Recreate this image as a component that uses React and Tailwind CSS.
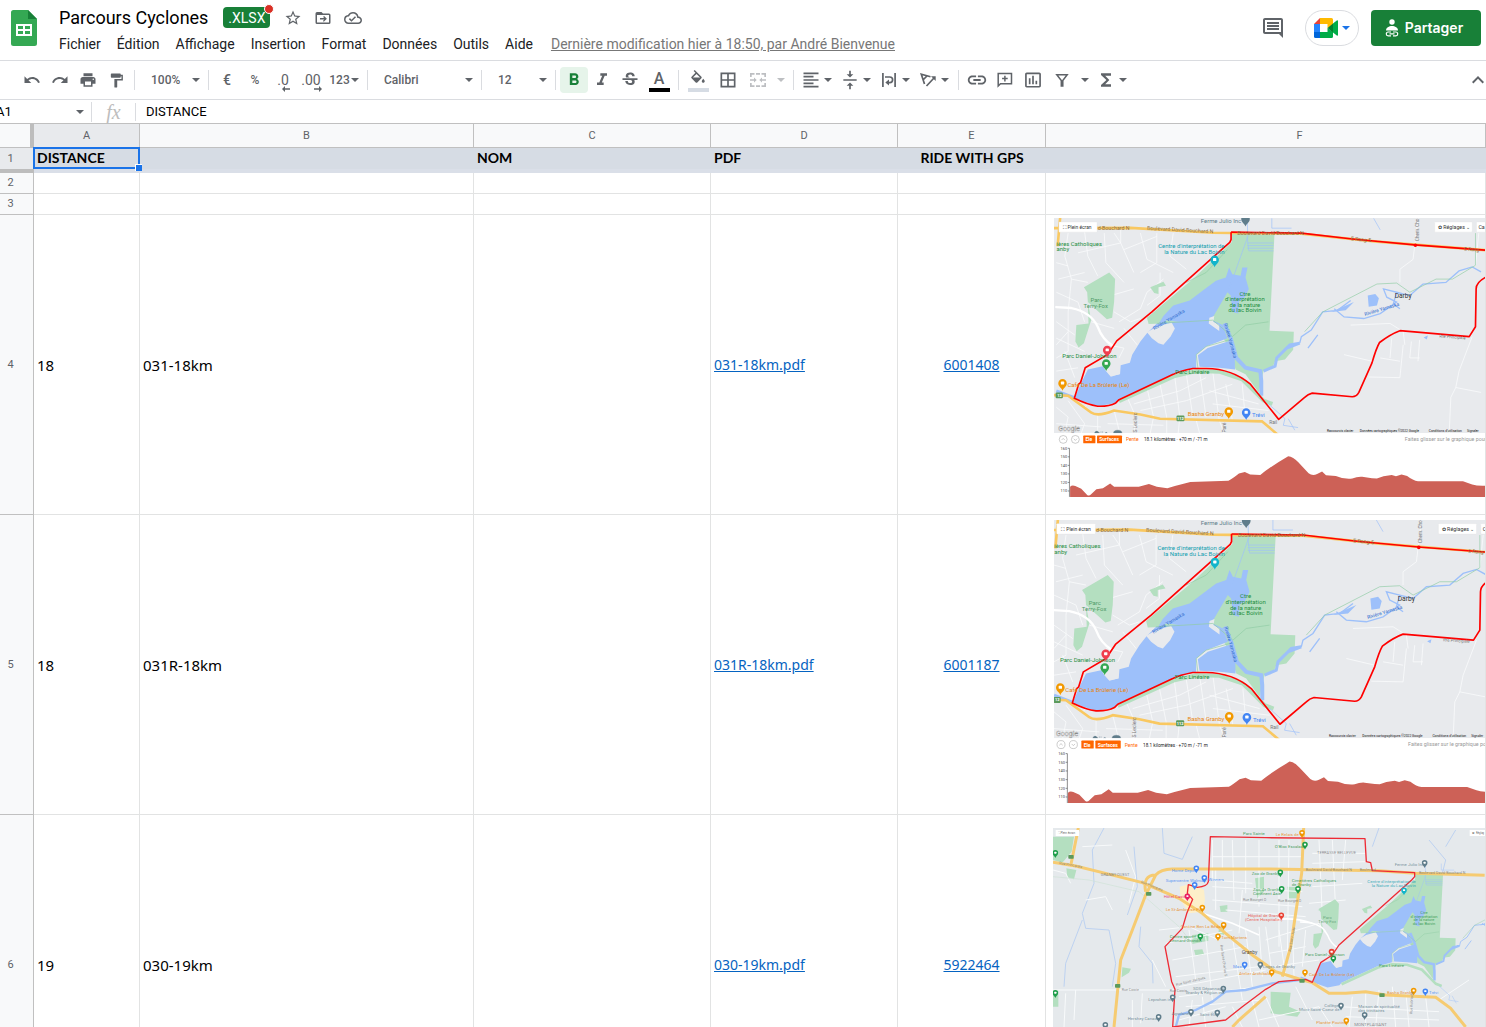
import React from "react";
import {
  MdUndo,
  MdRedo,
  MdPrint,
  MdFormatPaint,
  MdFormatBold,
  MdFormatItalic,
  MdStrikethroughS,
  MdBorderAll,
  MdFormatAlignLeft,
  MdVerticalAlignCenter,
  MdLink,
  MdInsertChartOutlined,
  MdFunctions,
  MdExpandLess,
  MdStarBorder,
  MdOutlineCloudDone,
} from "react-icons/md";

const UI = "font-['Roboto','Liberation_Sans',sans-serif]";
const HEAD = "font-['Lato','Open_Sans',sans-serif]";
const CELL = "font-['Noto_Sans','Open_Sans',sans-serif]";

function Caret({ className = "" }) {
  return (
    <svg viewBox="0 0 8 4" className={`h-1 w-2 shrink-0 fill-current ${className}`} aria-hidden="true">
      <path d="M0 0h8L4 4z" />
    </svg>
  );
}

function Sep() {
  return <div className="mx-1 h-5 w-px shrink-0 bg-[#dadce0]" />;
}

function Tool({ label, className = "w-7", children }) {
  return (
    <button type="button" aria-label={label} className={`flex h-[26px] shrink-0 items-center justify-center ${className}`}>
      {children}
    </button>
  );
}

function MenuTool({ label, children }) {
  return (
    <button type="button" aria-label={label} className="flex h-[26px] w-[39px] shrink-0 items-center">
      <span className="flex w-[26px] justify-center">{children}</span>
      <Caret />
    </button>
  );
}

function Pick({ label, value, className }) {
  return (
    <div className={`relative shrink-0 ${className}`}>
      <select
        aria-label={label}
        defaultValue={value}
        className="h-[26px] w-full appearance-none bg-transparent pl-3 text-xs font-medium text-[#5f6368] outline-none"
      >
        <option>{value}</option>
      </select>
      <Caret className="pointer-events-none absolute right-1 top-[11px]" />
    </div>
  );
}

function SheetsLogo() {
  return (
    <svg viewBox="0 0 26 36" className="h-9 w-[26px]" aria-hidden="true">
      <path d="M2.500 0H17l9 9v24.500a2.500 2.500 0 0 1-2.500 2.500h-21A2.500 2.500 0 0 1 0 33.500v-31A2.500 2.500 0 0 1 2.500 0z" fill="#34a853" />
      <path d="M17 0l9 9h-9z" fill="#188038" />
      <path d="M5 14h16v12H5zM7 16v3h5v-3zM14 16v3h5v-3zM7 21v3h5v-3zM14 21v3h5v-3z" fill="#fff" fillRule="evenodd" />
    </svg>
  );
}

function FolderMove() {
  return (
    <svg viewBox="0 0 24 24" className="size-[18px] fill-current" aria-hidden="true">
      <path d="M20 6h-8l-2-2H4a2 2 0 0 0-2 2v12a2 2 0 0 0 2 2h16a2 2 0 0 0 2-2V8a2 2 0 0 0-2-2zm0 12H4V8h16zM12.200 16.800l1.200 0L17.200 13l-3.800-3.800-1.300 1.300 1.500 1.600H8v1.800h5.600l-1.500 1.600z" />
    </svg>
  );
}

function MeetLogo() {
  return (
    <svg viewBox="0 0 24 20" className="h-5 w-6" aria-hidden="true">
      <path d="M6 0v6H0z" fill="#ea4335" />
      <path d="M0 6h6v8H0z" fill="#2684fc" />
      <path d="M0 14h6v6H1.500A1.500 1.500 0 0 1 0 18.500z" fill="#0066da" />
      <path d="M6 0h11.500A1.500 1.500 0 0 1 19 1.500V7l-5.500 3V6H6z" fill="#ffba00" />
      <path d="M6 14h7.500v-4l5.500 4v4.500a1.500 1.500 0 0 1-1.500 1.500H6z" fill="#00ac47" />
      <path d="M13.500 10L19 5.500v9z" fill="#00832d" />
      <path d="M19 5.500l3.800-3c.5-.4 1.200-.1 1.200.6v13.800c0 .7-.7 1-1.200.6l-3.800-3z" fill="#00ac47" />
    </svg>
  );
}

function ShareIcon() {
  return (
    <svg viewBox="0 0 14 18" className="h-[18px] w-[14px]" fill="none" aria-hidden="true">
      <circle cx="7" cy="3" r="2.700" fill="#fff" />
      <path d="M1 11.500c0-3 3-4.500 6-4.500s6 1.500 6 4.500z" fill="#fff" />
      <path d="M6 13H3.200a1.900 1.900 0 0 0 0 3.800H6M8 13h2.800a1.900 1.900 0 0 1 0 3.800H8M4.500 14.900h5" stroke="#fff" strokeWidth="1.200" />
    </svg>
  );
}

function DecimalIcon({ digits, more }) {
  return (
    <span className="relative text-sm font-normal leading-4">
      {digits}
      <svg viewBox="0 0 8 6" className="absolute -bottom-1 -right-px h-[6px] w-2 fill-current" aria-hidden="true">
        <path d={more ? "M0 2.300h5V0l3 3-3 3V3.700H0z" : "M8 2.300H3V0L0 3l3 3V3.700h5z"} />
      </svg>
    </span>
  );
}

function MergeIcon() {
  return (
    <svg viewBox="0 0 16 14" className="h-[14px] w-4 fill-current" aria-hidden="true">
      <path d="M0 0h4.500v1.700H1.700V4H0zM6 0h4v1.700H6zM11.500 0H16v4h-1.700V1.700h-2.800zM0 10h1.700v2.300h2.800V14H0zM6 12.300h4V14H6zM14.300 10H16v4h-4.500v-1.700h2.800zM0 6.200h4V4.500L6.700 7 4 9.500V7.800H0zM16 6.200h-4V4.500L9.300 7 12 9.500V7.800h4z" />
    </svg>
  );
}

function WrapIcon() {
  return (
    <svg viewBox="0 0 14 14" className="size-[14px]" fill="none" stroke="currentColor" strokeWidth="1.700" aria-hidden="true">
      <path d="M.9 0v14M13.100 0v14M3 4h4.800a2.800 2.800 0 0 1 0 5.600H5.500" />
      <path d="M7 6.600v6L3.300 9.600z" fill="currentColor" stroke="none" />
    </svg>
  );
}

function RotateIcon() {
  return (
    <svg viewBox="0 0 16 14" className="h-[14px] w-4" fill="none" stroke="currentColor" strokeWidth="1.700" aria-hidden="true">
      <path d="M4.500 11L1.300 1.300 10.500 3.800M3 6.800L7 3M6.500 13L14 5" />
      <path d="M11 3.300h4.700V8z" fill="currentColor" stroke="none" />
    </svg>
  );
}

function CommentAddIcon() {
  return (
    <svg viewBox="0 0 16 16" className="size-4" fill="none" stroke="currentColor" strokeWidth="1.500" aria-hidden="true">
      <path d="M1.200 14V1.500h13.300v10.200H3.500zM7.900 3.800v5.600M5.100 6.600h5.600" />
    </svg>
  );
}

function FilterIcon() {
  return (
    <svg viewBox="0 0 14 14" className="size-[14px]" fill="none" stroke="currentColor" strokeWidth="1.500" aria-hidden="true">
      <path d="M1.800 1.800h10.400L7.800 7.500v5.500H6.300V7.500z" />
    </svg>
  );
}

function FillIcon() {
  return (
    <svg viewBox="0 0 24 24" className="size-[18px] fill-current" aria-hidden="true">
      <path
        fillRule="evenodd"
        d="M16.560 8.940L7.620 0 6.210 1.410l2.380 2.380-5.150 5.150a1.500 1.500 0 0 0 0 2.120l5.500 5.500c.29.290.68.440 1.060.440s.77-.15 1.060-.44l5.500-5.500c.59-.58.59-1.530 0-2.120zM5.210 10L10 5.210 14.790 10zM19 11.500s-2 2.170-2 3.500c0 1.100.9 2 2 2s2-.9 2-2c0-1.330-2-3.500-2-3.500z"
      />
    </svg>
  );
}

const MENUS = ["Fichier", "Édition", "Affichage", "Insertion", "Format", "Données", "Outils", "Aide"];

function Header() {
  return (
    <header className="flex h-[61px] shrink-0 justify-between border-b border-[#dadce0] pl-[11px] pr-[5px]">
      <div className="flex">
        <a href="#accueil" aria-label="Accueil Sheets" className="mt-2.5">
          <SheetsLogo />
        </a>
        <div className="ml-[22px] pt-[7px]">
          <div className="flex h-[21px] items-center">
            <h1 className="whitespace-nowrap text-lg leading-5 text-black">Parcours Cyclones</h1>
            <span className="relative ml-[15px] flex h-[21px] w-[47px] items-center justify-center rounded bg-[#188038] text-sm text-white">
              .XLSX
              <span className="absolute -right-1 -top-[3px] size-[10px] rounded-full border border-white bg-[#d93025]" />
            </span>
            <div className="ml-3.5 flex items-center gap-3 text-[#5f6368]">
              <button type="button" aria-label="Suivre"><MdStarBorder className="size-[18px]" /></button>
              <button type="button" aria-label="Déplacer"><FolderMove /></button>
              <button type="button" aria-label="État du document"><MdOutlineCloudDone className="size-[18px]" /></button>
            </div>
          </div>
          <nav className="mt-1.5 flex h-5 items-center gap-4 whitespace-nowrap text-sm text-[#202124]">
            {MENUS.map((m) => (
              <button type="button" key={m}>{m}</button>
            ))}
            <a href="#historique" className="ml-0.5 text-[#777] underline">
              Dernière modification hier à 18:50, par André Bienvenue
            </a>
          </nav>
        </div>
      </div>
      <div className="mt-2.5 flex h-9 items-center">
        <button type="button" aria-label="Commentaires" className="mr-5 text-[#5f6368]">
          <svg viewBox="0 0 24 24" className="size-6 fill-current" aria-hidden="true">
            <path d="M21.990 4c0-1.100-.89-2-1.990-2H4c-1.100 0-2 .9-2 2v12c0 1.100.9 2 2 2h14l4 4-.01-18zM20 4v12H4V4zM6 12h12v2H6zm0-3h12v2H6zm0-3h12v2H6z" />
          </svg>
        </button>
        <button type="button" aria-label="Meet" className="flex h-9 w-[54px] items-center justify-center gap-1 rounded-full border border-[#dadce0] text-[#1a73e8]">
          <MeetLogo />
          <Caret />
        </button>
        <button type="button" className="ml-3 flex h-9 w-[110px] items-center justify-center gap-1.5 rounded bg-[#188038] pr-1 font-['Inter',sans-serif] text-sm font-semibold text-white">
          <ShareIcon />
          Partager
        </button>
      </div>
    </header>
  );
}

function Toolbar() {
  return (
    <div className="flex h-[39px] shrink-0 items-center justify-between border-b border-[#dadce0] text-[#5f6368]">
      <div className="flex items-center pl-[18px] text-sm font-medium">
        <Tool label="Annuler"><MdUndo className="size-[18px]" /></Tool>
        <Tool label="Rétablir"><MdRedo className="size-[18px]" /></Tool>
        <Tool label="Imprimer"><MdPrint className="size-[18px]" /></Tool>
        <Tool label="Copier la mise en forme"><MdFormatPaint className="size-[17px]" /></Tool>
        <Sep />
        <Pick label="Zoom" value="100%" className="w-[65px]" />
        <Sep />
        <Tool label="Format euro">€</Tool>
        <Tool label="Format pourcentage"><span className="text-xs">%</span></Tool>
        <Tool label="Réduire les décimales"><DecimalIcon digits=".0" /></Tool>
        <Tool label="Ajouter des décimales"><DecimalIcon digits=".00" more /></Tool>
        <Tool label="Autres formats" className="w-[38px]">
          <span className="mr-px text-xs">123</span>
          <Caret />
        </Tool>
        <Sep />
        <Pick label="Police" value="Calibri" className="w-[105px]" />
        <Sep />
        <Pick label="Taille de police" value="12" className="w-[65px]" />
        <Sep />
        <Tool label="Gras" className="w-7 rounded-sm bg-[#e6f4ea] text-[#188038]"><MdFormatBold className="size-5" /></Tool>
        <Tool label="Italique"><MdFormatItalic className="size-5" /></Tool>
        <Tool label="Barré"><MdStrikethroughS className="size-5" /></Tool>
        <Tool label="Couleur du texte" className="w-[30px]">
          <span className="flex h-6 w-[21px] items-center justify-center border-b-4 border-black pt-0.5 text-base">A</span>
        </Tool>
        <Sep />
        <Tool label="Couleur de remplissage" className="w-[30px]">
          <span className="flex h-6 w-[21px] items-end justify-center border-b-4 border-[#d6dce4]"><FillIcon /></span>
        </Tool>
        <Tool label="Bordures" className="w-[30px]"><MdBorderAll className="size-5" /></Tool>
        <Tool label="Fusionner" className="w-[30px] text-[#bdbfc2]"><MergeIcon /></Tool>
        <Tool label="Options de fusion" className="w-4 text-[#bdbfc2]"><Caret /></Tool>
        <Sep />
        <MenuTool label="Alignement horizontal"><MdFormatAlignLeft className="size-5" /></MenuTool>
        <MenuTool label="Alignement vertical"><MdVerticalAlignCenter className="size-5" /></MenuTool>
        <MenuTool label="Retour à la ligne"><WrapIcon /></MenuTool>
        <MenuTool label="Rotation du texte"><RotateIcon /></MenuTool>
        <Sep />
        <Tool label="Lien"><MdLink className="size-[22px]" /></Tool>
        <Tool label="Commentaire"><CommentAddIcon /></Tool>
        <Tool label="Graphique"><MdInsertChartOutlined className="size-5" /></Tool>
        <Tool label="Filtre" className="w-[30px]"><FilterIcon /></Tool>
        <Tool label="Vues filtrées" className="w-4"><Caret /></Tool>
        <MenuTool label="Fonctions"><MdFunctions className="size-5" /></MenuTool>
      </div>
      <button type="button" aria-label="Masquer les menus" className="-mr-1"><MdExpandLess className="size-6" /></button>
    </div>
  );
}

function FormulaBar() {
  return (
    <div className="flex h-6 shrink-0 items-center border-b border-[#c0c0c0] text-[13px] text-black">
      <input aria-label="Zone de nom" defaultValue="A1" className="-ml-1 w-20 outline-none" />
      <button type="button" aria-label="Plages nommées" className="flex w-[15px] justify-start text-[#5f6368]"><Caret /></button>
      <div className="h-5 w-px bg-[#dadce0]" />
      <span className="w-[43px] text-center font-['Liberation_Serif',serif] text-xl italic leading-5 text-[#bdbdbd]">fx</span>
      <div className="h-[18px] w-px bg-[#dadce0]" />
      <input aria-label="Barre de formule" defaultValue="DISTANCE" className="ml-2.5 min-w-0 flex-1 outline-none" />
    </div>
  );
}

const STREETS_WEST = [
  "M60 60L50 130L70 200L60 300M110 55L120 130L150 190M170 60L175 150L230 210M90 120L220 90L260 180M30 200L110 180M24 240L90 270L110 330",
  "M230 110L330 70M280 60L300 140L380 180M24 330L80 370M60 300L60 420L24 440M24 380L110 420M50 420L80 500M24 480L90 470",
  "M215 330L280 290L300 240L350 200M230 350L270 400M180 400L230 410L215 440M130 330L200 350M190 250L260 230M200 60L220 90L220 50M330 60L330 150L280 180",
  "M24 150L60 160M70 200L120 210M200 300L250 330L280 320M340 180L340 250L300 280M380 60L370 130L420 170M24 400L60 360",
];
const STREETS_SOUTH = [
  "M110 590L140 560M200 600L215 660M240 560L262 610L262 669M300 530L320 620L310 669M340 520L360 620L360 669M385 500L400 620L395 669M420 490L440 620",
  "M260 580L400 540L480 500M280 600L420 570L560 520M460 480L480 620M500 480L520 630L535 669M540 520L560 630M590 520L600 630M490 540L640 580M500 580L670 600",
  "M24 590L60 620L50 669M60 570L110 640L100 669M24 640L160 650M150 615L150 669M450 630L460 669M180 640L350 645",
];
const STREETS_EAST = [
  "M1125 15L1110 140L1070 170L1070 210M920 340L1040 335L1080 360L1085 400M900 430L985 450M1045 380L1040 440M1080 400L1070 500L975 498M1105 390L1100 440L1130 440M1130 385L1125 450M1010 440L1070 450",
  "M1290 375L1250 480L1240 530L1225 560L1220 669M1240 530L1317 545M1310 60L1300 160",
];

// Lake, parks and river shared by every map of the Lac Boivin area.
function LakeScenery() {
  return (
    <g fill="none">
      <path fill="#b4dfc0" d="M558 62L688 66L673 357L747 360L745 415L720 445L690 450L682 470L655 480L640 545L600 490L570 475L545 400L500 330L305 337L300 318L440 200L558 88z" />
      <path fill="#b4dfc0" d="M185 180L203 200L200 270L194 318L178 322L120 270L118 240L108 225zM120 270L130 325L108 395L92 408L82 390L85 340L122 335zM310 225L350 208L358 220L335 225L335 245L322 242z" />
      <path fill="#9dc0fa" d="M606 165L600 195L610 230L595 260L580 268L578 305L560 300L555 250L545 240L510 300L495 325L400 330L360 325L330 345L350 312L380 280L430 265L470 235L510 205L540 195L550 165L560 185L585 190L590 165z" />
      <path fill="#9dc0fa" d="M330 335L300 365L280 390L255 430L248 455L220 462L218 490L190 495L165 465L120 475L98 520L80 563L150 587L205 577L215 565L380 490L450 470L450 430L480 405L545 380L530 340L500 325L400 328z" />
      <path fill="#9dc0fa" d="M460 467L455 432L485 410L553 388L567 430L568 475L520 470z" />
      <path fill="#e8eaed" d="M300 362L330 345L375 332L385 350L372 375L350 400L335 395L315 380zM490 318L505 312L502 330L520 340L520 358L488 335zM120 473L140 465L165 463L175 480L190 497L215 490L218 460L150 430z" />
      <path stroke="#9dc0fa" strokeWidth="12" d="M535 335L555 380L572 440L600 470L645 480L648 510L648 555" />
      <path stroke="#b4dfc0" strokeWidth="12" d="M215 572L385 495L450 480L520 482L590 505L655 570L682 580" />
      <path stroke="#9dc0fa" strokeWidth="9" d="M24 540L85 563M655 480L690 465L695 440L725 410L765 395M725 410L735 400L765 395" />
      <path stroke="#9dc0fa" strokeWidth="4" d="M765 395L770 375L800 355L835 300L880 295L920 265M790 410L820 370M870 290L900 315L960 320L1010 305L1060 270L1030 255L1020 230L1060 240L1100 250L1140 215L1210 210L1250 175L1290 163L1317 178M1060 240L1050 275L1070 290" />
      <path fill="#9dc0fa" d="M972 250L995 245L1006 258L1000 280L975 284zM860 300L930 270L905 295zM1142 378L1155 372L1152 384z" />
      <path stroke="#9dc0fa" strokeWidth="2" d="M605 90H685M605 98H685M605 106H685M605 70L610 114H685M605 15L607 70M680 15V45H740M550 230L607 70M670 580L720 625L715 645L760 652M730 625L750 660M990 15L1010 50" />
      <path stroke="#8fcca4" strokeWidth="2" d="M330 335L500 325L560 375L600 340L670 330M780 360L835 300L1000 215L1060 212L1100 240L1180 200L1230 200L1300 158V60M455 470L450 430L480 405L550 385M420 210L480 180L545 110" />
      <path stroke="#fff" strokeWidth="7" strokeLinecap="round" d="M24 285L70 288Q130 300 150 345Q165 385 195 402" />
    </g>
  );
}

function Pin({ x, y, color, s = 1, inner = "#fff" }) {
  return (
    <g transform={`translate(${x} ${y}) scale(${s})`}>
      <path d="M0 18C-3 8-13 6-13-5a13 13 0 0 1 26 0C13 6 3 8 0 18z" fill={color} />
      <rect x="-5" y="-10" width="10" height="9" rx="2" fill={inner} />
    </g>
  );
}

const PROFILE =
  "M66 863V832Q72 826 82 830L100 838L118 857Q124 861 130 855L146 840L166 837L188 822L200 832H275L306 824L330 832L362 837L385 830L432 818L548 814Q560 808 580 792L598 787L614 795L645 796Q680 768 730 739Q745 740 760 757L792 791Q804 800 818 793L833 786L845 797L875 799Q900 810 925 807Q940 801 955 802L985 806L1000 807L1020 800L1045 796L1058 800L1075 795L1092 799Q1110 813 1125 815H1262L1290 825Q1305 830 1329 829V863z";

function LakeRouteMap({ viewBox, className, label }) {
  return (
    <svg viewBox={viewBox} preserveAspectRatio="xMinYMin slice" className={className} role="img" aria-label={label}>
      <rect x="10" y="10" width="1330" height="659" fill="#e8eaed" />
      <g fill="none" stroke="#f9fafb" strokeWidth="2.500">
        {[...STREETS_WEST, ...STREETS_SOUTH, ...STREETS_EAST].map((d) => (
          <path key={d} d={d} />
        ))}
      </g>
      <LakeScenery />
      <g fill="none" stroke="#f9c861" strokeWidth="8">
        <path d="M10 45L250 44L500 59L770 62L1000 86L1330 112M36 10L28 100M10 553L60 555L130 606Q150 620 200 600L280 612L340 625L650 633L700 675" />
      </g>
      <g fill="none" stroke="#f00" strokeWidth="5" strokeLinejoin="round">
        <path d="M556 57L770 60L925 78L1115 96L1330 112" />
        <path d="M1330 195Q1302 210 1302 230L1300 345L1281 375L1070 357Q1040 368 1008 393Q998 410 985 455L945 545Q938 558 925 558L803 547Q790 550 780 560L701 627L615 520Q560 473 480 472H440Q400 480 380 490L215 567L205 577Q185 588 150 587Q120 583 79 563L92 520L98 515L112 470L180 430L208 388L315 300L552 88L556 80V57" />
        <circle cx="1117" cy="97" r="3" />
      </g>
      <g fill="#fff" stroke="#e3e3e3">
        <rect x="32" y="26" width="116" height="31" rx="2" />
        <rect x="1176" y="26" width="114" height="31" rx="2" />
        <rect x="1303" y="26" width="60" height="31" rx="2" />
      </g>
      <g fontFamily="Roboto, sans-serif" fontSize="18" fill="#333">
        <text x="45" y="48" fontSize="15">⛶ Plein écran</text>
        <text x="1186" y="48" fontSize="16">✿ Réglages ⌄</text>
        <text x="1309" y="48" fontSize="16">Ca</text>
        <g fill="#8a6d45" fontSize="16">
          <text x="150" y="52">d-Bouchard N</text>
          <text x="300" y="50" transform="rotate(3 300 50)">Boulevard David-Bouchard N</text>
          <text x="575" y="65">Boulevard David-Bouchard N</text>
          <text x="920" y="82" transform="rotate(5 920 82)">E Rang 5</text>
          <text x="1265" y="113" fontSize="15" transform="rotate(5 1265 113)">E Rang</text>
        </g>
        <text x="464" y="30" fill="#607d8b">Ferme Julio Inc</text>
        <g fill="#1e8e3e">
          <text x="25" y="98">ières Catholiques</text>
          <text x="25" y="116">anby</text>
          <text x="128" y="270" fill="#4f9a67">Parc</text>
          <text x="107" y="287" fill="#4f9a67">Terry-Fox</text>
          <text x="42" y="440">Parc Daniel-Johnson</text>
          <text x="386" y="490">Parc Linéaire</text>
          <g textAnchor="middle">
            <text x="598" y="250">Ctre</text>
            <text x="598" y="267">d'interprétation</text>
            <text x="598" y="284">de la nature</text>
            <text x="598" y="301">du lac Boivin</text>
          </g>
        </g>
        <g fill="#129eaf" textAnchor="end">
          <text x="536" y="106">Centre d'interprétation de</text>
          <text x="536" y="124">la Nature du Lac Boivin</text>
        </g>
        <g fill="#2f6bce" fontSize="15">
          <text x="322" y="356" transform="rotate(-31 322 356)">Rivière Yamaska</text>
          <text x="534" y="336" transform="rotate(74 534 336)">Rivière Yamaska</text>
          <text x="964" y="312" transform="rotate(-17 964 312)">Rivière Yamaska</text>
        </g>
        <text x="1054" y="259" fontSize="20">Darby</text>
        <text x="58" y="530" fill="#e8850c">Café De La Brûlerie (Le)</text>
        <text x="424" y="616" fill="#e8850c">Basha Granby</text>
        <text x="620" y="619" fill="#4285f4">Trévi</text>
        <g fill="#777" fontSize="15">
          <text x="1128" y="84" fontSize="14" transform="rotate(-90 1128 84)">Chem. Cho</text>
          <text x="270" y="667" transform="rotate(-90 270 667)">S Leclerc</text>
          <text x="540" y="667" transform="rotate(-90 540 667)">Paré</text>
          <text x="672" y="641">Rail</text>
          <text x="1190" y="378" fontSize="13" transform="rotate(4 1190 378)">Rte Principale</text>
        </g>
        <path d="M140 669Q143 661 150 663L156 669zM160 669V663M165 669V663M172 669Q176 664 180 669M198 669A13 9 0 0 1 224 669" fill="#607d8b" stroke="#607d8b" />
        <text x="30" y="662" fontSize="21" fill="#fff" stroke="#8a8a8a" strokeWidth="1">Google</text>
        <g fontSize="10" fill="#111">
          <text x="848" y="665">Raccourcis clavier</text>
          <text x="948" y="665">Données cartographiques ©2022 Google</text>
          <text x="1158" y="665">Conditions d'utilisation</text>
          <text x="1274" y="665">Signaler</text>
        </g>
      </g>
      <Pin x={600} y={22} color="#607d8b" inner="#607d8b" />
      <Pin x={506} y={146} color="#12b5cb" />
      <Pin x={179} y={421} color="#f03e4e" />
      <Pin x={176} y={462} color="#34a853" />
      <Pin x={43} y={522} color="#f29900" />
      <Pin x={549} y={608} color="#f29900" />
      <Pin x={602} y={611} color="#4285f4" />
      <g fontFamily="Roboto, sans-serif" fontSize="12" fontWeight="700" fill="#fff" textAnchor="middle">
        <rect x="22" y="545" width="22" height="18" rx="3" fill="#5c9a5c" />
        <rect x="390" y="615" width="24" height="18" rx="3" fill="#5c9a5c" />
        <text x="402" y="628">112</text>
        <text x="34" y="558">12</text>
      </g>
      <rect x="10" y="669" width="1330" height="200" fill="#fff" />
      <g fill="none" stroke="#999" strokeWidth="1.500">
        <circle cx="45" cy="688" r="12" />
        <circle cx="82" cy="688" r="12" />
        <path d="M40 690l5-5 5 5M77 686l5 5 5-5" />
      </g>
      <g fill="#f60">
        <rect x="106" y="676" width="37" height="24" rx="2" />
        <rect x="148" y="676" width="76" height="24" rx="2" />
      </g>
      <g fontFamily="Roboto, sans-serif" fontSize="15">
        <text x="113" y="694" fill="#fff" fontWeight="700">Ele</text>
        <text x="155" y="694" fill="#fff" fontWeight="700">Surfaces</text>
        <text x="236" y="694" fill="#f60">Pente</text>
        <text x="291" y="694" fill="#222" fontSize="14">18.1 kilomètres · +70 m / -71 m</text>
        <text x="1085" y="693" fill="#999" fontSize="16">Faites glisser sur le graphique pour zo</text>
      </g>
      <path d={PROFILE} fill="#cd6157" />
      <path d="M59 715H64V863M59 741H64M59 767H64M59 793H64M59 819H64M59 845H64" fill="none" stroke="#555" strokeWidth="2" />
      <g fontFamily="Roboto, sans-serif" fontSize="12" fill="#444" textAnchor="end">
        {[160, 150, 140, 130, 120, 110].map((n, i) => (
          <text key={n} x="57" y={719 + i * 26}>{n}</text>
        ))}
      </g>
    </svg>
  );
}

const TOWN_STREETS = [
  "M22 510H390M60 520L55 621M90 510L85 600M110 80L200 75M120 240L180 230L200 270M240 90L270 170L250 250M260 540L260 621M290 520L285 610M320 420L360 500M22 150L60 160L75 190",
  "M340 330L430 320L520 360M360 370L560 330M380 420L600 380M390 470L640 440M400 500L660 450M430 330L450 480M480 350L500 540M560 350L590 540M600 330L620 500M640 320L650 470M400 530L640 500M420 560L650 540",
  "M500 60V180L620 190M530 60V150M560 60L565 240M600 60V220M640 60V260M500 110H770M500 200L770 215M500 240L770 260M540 270L780 290M510 150V270M700 60V380M730 60L725 420M590 210L580 340",
  "M660 360L820 310L840 340M670 400L780 380M660 320L680 470M700 330L720 470M740 320L745 470M780 330L770 440M680 440L820 420M820 60L830 290M860 60L870 270M900 60L890 180M800 100H960M800 200L950 190M790 250L900 240M800 130L960 125",
  "M920 530L910 621M960 520V621M1000 510L990 621M1040 500L1050 621M1080 510L1090 621M1140 530L1150 621M880 560L1180 575M900 590L1180 600M820 560L860 621M1180 540L1270 480",
  "M400 600L540 560M440 540L430 621M470 530L480 621M560 560L590 621M620 540L640 621M660 530L700 621M640 600L820 560M750 500L800 600",
];
const GREY_PINS = [[533, 509], [436, 579], [515, 581], [381, 535], [339, 594], [179, 618], [644, 437], [886, 560], [957, 588], [1137, 132]];
const ORANGE_PINS = [[534, 318], [517, 352], [470, 266], [769, 42], [778, 460], [678, 460], [902, 605], [1104, 515]];
const BLUE_PINS = [[452, 148], [476, 177], [447, 198], [597, 437], [1139, 517]];
const GREEN_PINS = [[29, 102], [464, 352], [29, 522], [778, 77], [757, 210], [704, 160], [708, 210], [863, 418]];

const TOWN_LABELS = [
  [378, 155, "Home Depot", "#4285f4"],
  [360, 186, "Supercentre Walmart", "#4285f4"],
  [488, 182, "Winners", "#4285f4"],
  [354, 235, "Hôtel Castel", "#e91e63"],
  [360, 273, "Le St-Ambroise Pub", "#e8850c"],
  [405, 323, "Cantine Ben La Bédaine", "#e8850c"],
  [527, 358, "Tom Martens", "#e8850c"],
  [372, 354, "Centre sportif", "#1e8e3e"],
  [372, 367, "Léonard-Grondin", "#1e8e3e"],
  [607, 290, "Hôpital de Granby", "#ea4335"],
  [598, 303, "(Centre Hospitalier)", "#ea4335"],
  [618, 166, "Zoo de Granby", "#1e8e3e"],
  [622, 212, "Zoo de Granby", "#1e8e3e"],
  [622, 225, "Continent Asie", "#1e8e3e"],
  [562, 443, "Maxi", "#4285f4"],
  [580, 466, "Atelier Archibald", "#e8850c"],
  [442, 510, "SOS Dépannage", "#607d8b"],
  [420, 522, "Granby & Région inc.", "#607d8b"],
  [308, 542, "Leprohon inc", "#607d8b"],
  [246, 600, "Hershey Canada", "#607d8b"],
  [378, 585, "Agrolane", "#607d8b"],
  [462, 587, "Saint-Éloi", "#607d8b"],
  [690, 49, "Le Relais de S", "#e8850c"],
  [687, 84, "O'Bloc Escalade", "#1e8e3e"],
  [592, 45, "Parc Sainte", "#1e8e3e"],
  [738, 186, "Cimetières Catholiques", "#1e8e3e"],
  [738, 198, "de Granby", "#1e8e3e"],
  [1047, 139, "Ferme Julio Inc", "#607d8b"],
  [965, 189, "Centre d'interprétation de", "#129eaf"],
  [978, 201, "la Nature du Lac Boivin", "#129eaf"],
  [778, 407, "Parc Daniel-Johnson", "#1e8e3e"],
  [832, 296, "Parc", "#5a9b6e"],
  [818, 308, "Terry-Fox", "#5a9b6e"],
  [1000, 440, "Parc Linéaire", "#1e8e3e"],
  [790, 468, "Café De La Brûlerie (Le)", "#e8850c"],
  [1024, 521, "Basha Granby", "#e8850c"],
  [1150, 523, "Trévi", "#4285f4"],
  [836, 562, "Collège", "#607d8b"],
  [760, 573, "Mont-Sacré-Coeur de", "#607d8b"],
  [938, 564, "Maison de spiritualité", "#607d8b"],
  [938, 576, "des trinitaires", "#607d8b"],
  [812, 611, "Planète Poutine", "#e8850c"],
  [652, 443, "Loges de Granby", "#607d8b"],
];

function TownRouteMap({ className, label }) {
  return (
    <svg viewBox="22 24 1296 720" preserveAspectRatio="xMinYMin slice" className={className} role="img" aria-label={label}>
      <rect x="22" y="24" width="1310" height="720" fill="#e5e9ec" />
      <path fill="#b4dfc0" d="M22 50H85L78 95L50 128L22 120zM62 145L92 150L85 178L65 172zM230 442L256 446L250 458L228 472zM440 345L488 340V362L440 372zM445 390L470 388L476 404L450 408zM628 175L655 170V215L635 235zM725 200L760 202L762 235L730 235zM675 515L735 518L730 560L765 575L755 590L675 580zM22 510H38V560H22zM815 270L870 262L860 278zM522 258L545 255V275L525 276zM520 325L535 322V345L518 340z" />
      <path fill="#fdefc9" d="M402 200L440 190L475 210L478 240L470 275L430 280L405 240z" />
      <path fill="none" stroke="#bdd2f1" strokeWidth="3" d="M175 24L140 90L145 190L110 280L120 325L190 330L210 430L200 500M110 300L60 430L55 500M265 80L275 200L245 285M350 24L355 100L410 118L440 50M285 320L280 380L320 430L322 490M1000 24L980 80M1150 60L1200 120L1190 160M1230 30L1200 80" />
      <g fill="none" stroke="#f8fafb" strokeWidth="3">
        {TOWN_STREETS.map((d) => (
          <path key={d} d={d} />
        ))}
      </g>
      <path d="M470 280L560 310L640 345M690 300Q740 290 800 310" fill="none" stroke="#fff" strokeWidth="5" />
      <path d="M22 170L130 180L280 215L400 320L440 370" fill="none" stroke="#cfe3d6" strokeWidth="2" />
      <path d="M390 621L400 585L450 570L500 545L540 515L600 510L680 490L760 480" fill="none" stroke="#9dc0fa" strokeWidth="7" />
      <g transform="translate(749.200 121) scale(.6436 .65)">
        <LakeScenery />
      </g>
      <g fill="none" stroke="#f6cb71" strokeWidth="9">
        <path d="M22 127L90 138L180 160L290 188L400 235L470 280L540 340L620 405L690 455L770 480L800 488L850 520L900 520L960 515L1020 525L1170 532L1215 565L1260 621" />
        <path d="M205 621L218 490L225 420L260 330L300 225L330 165Q345 148 380 147L660 147L1000 152L1110 160L1317 166M98 24L75 138M330 165Q290 165 300 215M774 24L768 160L735 380L710 470M660 530L580 600L560 621" />
      </g>
      <path
        d="M382 621L540 600L590 560L660 508L700 485L780 478L800 487L825 428L860 405L880 375L1098 180L1107 170V158L980 152L975 128L962 125L958 56L660 53L494 50L488 185Q485 200 455 202L428 194L425 220L441 238L424 278L410 325L358 380L378 485L388 508L381 621"
        fill="none"
        stroke="#ee2b35"
        strokeWidth="4"
        strokeLinejoin="round"
      />
      {GREY_PINS.map(([x, y]) => <Pin key={`${x}-${y}`} x={x} y={y} color="#607d8b" s={0.65} />)}
      {ORANGE_PINS.map(([x, y]) => <Pin key={`${x}-${y}`} x={x} y={y} color="#f29900" s={0.65} />)}
      {BLUE_PINS.map(([x, y]) => <Pin key={`${x}-${y}`} x={x} y={y} color="#4285f4" s={0.65} />)}
      {GREEN_PINS.map(([x, y]) => <Pin key={`${x}-${y}`} x={x} y={y} color="#1e9e4a" s={0.65} />)}
      <Pin x={425} y={232} color="#e91e63" s={0.65} />
      <Pin x={707} y={289} color="#ea4335" s={0.65} />
      <Pin x={1075} y={214} color="#12b5cb" s={0.65} />
      <Pin x={858} y={399} color="#ea4335" s={0.7} />
      <g fill="#5c9a5c">
        <rect x="68" y="105" width="16" height="11" rx="2" />
        <rect x="301" y="216" width="16" height="11" rx="2" />
        <rect x="208" y="492" width="16" height="11" rx="2" />
        <rect x="1001" y="520" width="16" height="11" rx="2" />
        <rect x="761" y="477" width="16" height="11" rx="2" />
      </g>
      <g fontFamily="Roboto, sans-serif" fontSize="13" fillOpacity="0.85">
        {TOWN_LABELS.map(([x, y, text, fill], i) => (
          <text key={i} x={x} y={y} fill={fill}>{text}</text>
        ))}
        <g textAnchor="middle" fill="#1e8e3e" fontSize="12">
          <text x="1135" y="282">Ctre</text>
          <text x="1135" y="293">d'interprétation</text>
          <text x="1135" y="304">de la nature</text>
          <text x="1135" y="315">du lac Boivin</text>
        </g>
        <g fill="#777" fontSize="11">
          <text x="165" y="168" fontSize="12">GRANBY-OUEST</text>
          <text x="814" y="101" fontSize="12">TERRASSE BELLEVUE</text>
          <text x="926" y="618" fontSize="13">MONTPLAISANT</text>
          <text x="588" y="401" fontSize="15" fill="#333">Granby</text>
          <text x="40" y="132" transform="rotate(10 40 132)">Rue Principale</text>
          <text x="285" y="188" transform="rotate(22 285 188)">Rue Principale</text>
          <text x="228" y="514">Rue Cowie</text>
          <text x="372" y="516">Rue Cowie</text>
          <text x="392" y="498" transform="rotate(-14 392 498)">Rue Saint-Jacques</text>
          <text x="524" y="375" transform="rotate(82 524 375)">Rue Saint-Charles S</text>
          <text x="592" y="243">Rue Bourget O</text>
          <text x="697" y="245">Rue Bourget O</text>
          <text x="780" y="154">Boulevard David-Bouchard N</text>
          <text x="942" y="154">Boulevard</text>
          <text x="1120" y="163">Boulevard David-Bouchard N</text>
          <text x="736" y="395" transform="rotate(-80 736 395)">Rue Saint-Jude</text>
          <text x="1100" y="582" transform="rotate(-88 1100 582)">Rue Robitaille</text>
        </g>
        <rect x="30" y="30" width="70" height="18" fill="#fff" fillOpacity="1" />
        <rect x="1272" y="30" width="60" height="18" fill="#fff" fillOpacity="1" />
        <text x="36" y="43" fontSize="9" fill="#444">⛶ Plein écran</text>
        <text x="1280" y="43" fontSize="8" fill="#444">✿ Réglag</text>
      </g>
    </svg>
  );
}

const ROUTES = [
  { row: 4, distance: "18", name: "031-18km", pdf: "031-18km.pdf", gps: "6001408" },
  { row: 5, distance: "18", name: "031R-18km", pdf: "031R-18km.pdf", gps: "6001187" },
  { row: 6, distance: "19", name: "030-19km", pdf: "030-19km.pdf", gps: "5922464" },
];

function RouteImage({ row }) {
  if (row === 4)
    return <LakeRouteMap viewBox="17 14 1312 850" className="mt-[3px] ml-2 h-[279px] w-[calc(100%-8px)]" label="Carte du parcours 031" />;
  if (row === 5)
    return <LakeRouteMap viewBox="24 15 1293 848" className="mt-[5px] ml-2 h-[283px] w-[calc(100%-8px)]" label="Carte du parcours 031R" />;
  return <TownRouteMap className="mt-[13px] ml-[7px] h-[240px] w-[calc(100%-7px)]" label="Carte du parcours 030" />;
}

const LINE = "border-b border-r border-[#e2e3e3]";
const ROW_HEAD = "border-b border-r border-[#c0c0c0] bg-[#f8f9fa] pr-3 text-center text-[11px] font-normal text-[#5f6368]";

function Grid() {
  return (
    <main className="min-h-0 flex-1 overflow-hidden">
      <table className="w-full table-fixed border-separate border-spacing-0">
        <colgroup>
          <col className="w-[34px]" />
          <col className="w-[106px]" />
          <col className="w-[334px]" />
          <col className="w-[237px]" />
          <col className="w-[187px]" />
          <col className="w-[148px]" />
          <col />
        </colgroup>
        <thead>
          <tr className="h-6">
            <td className="border-b border-r-4 border-b-[#c0c0c0] border-r-[#bdbdbd] bg-[#f8f9fa] p-0" />
            {["A", "B", "C", "D", "E", "F"].map((c) => (
              <th
                key={c}
                scope="col"
                className={`border-b border-r border-[#c0c0c0] py-0 pr-0 text-[11px] font-normal leading-4 text-[#5f6368] ${c === "A" ? "bg-[#e8eaed]" : "bg-[#f8f9fa]"} ${c === "F" ? "pl-[68px]" : "pl-0"}`}
              >
                {c}
              </th>
            ))}
          </tr>
        </thead>
        <tbody>
          <tr className={`h-[25px] bg-[#d6dce4] text-left text-sm leading-5 text-black ${HEAD}`}>
            <th scope="row" className={`border-b-4 border-r border-b-[#bdbdbd] border-r-[#c0c0c0] bg-[#e8eaed] p-0 pr-3 text-center text-[11px] font-normal text-[#5f6368] ${UI}`}>1</th>
            <th scope="col" className="relative border-b-4 border-[#dadfe8] p-0 pl-[3px] align-top font-bold">
              DISTANCE
              <span className="pointer-events-none absolute -left-px -top-px h-[22px] w-[107px] border-2 border-[#1a73e8]" />
              <span className="pointer-events-none absolute -right-0.5 top-4 z-10 size-[7px] border-l border-t border-white bg-[#1a73e8]" />
            </th>
            <td className="border-b-4 border-[#dadfe8] p-0" />
            <th scope="col" className="border-b-4 border-[#dadfe8] p-0 pl-[3px] align-top font-bold">NOM</th>
            <th scope="col" className="border-b-4 border-[#dadfe8] p-0 pl-[3px] align-top font-bold">PDF</th>
            <th scope="col" className="border-b-4 border-[#dadfe8] p-0 text-center align-top font-bold">RIDE WITH GPS</th>
            <td className="border-b-4 border-[#dadfe8] p-0" />
          </tr>
          {[2, 3].map((n) => (
            <tr key={n} className="h-[21px]">
              <th scope="row" className={`p-0 leading-4 ${ROW_HEAD}`}>{n}</th>
              {["A", "B", "C", "D", "E", "F"].map((c) => (
                <td key={c} className={`p-0 ${LINE}`} />
              ))}
            </tr>
          ))}
          {ROUTES.map((r) => (
            <tr key={r.row} className={`h-[300px] text-[15px] leading-5 text-black ${CELL}`}>
              <th scope="row" className={`p-0 ${ROW_HEAD} ${UI}`}>{r.row}</th>
              <td className={`p-0 pl-[3px] ${LINE}`}>{r.distance}</td>
              <td className={`p-0 pl-[3px] ${LINE}`}>{r.name}</td>
              <td className={`p-0 ${LINE}`} />
              <td className={`p-0 pl-[3px] text-sm ${LINE}`}>
                <a href={`#${r.pdf}`} className="text-[#0563c1] underline">{r.pdf}</a>
              </td>
              <td className={`p-0 text-center text-sm ${LINE}`}>
                <a href={`#${r.gps}`} className="text-[#0563c1] underline">{r.gps}</a>
              </td>
              <td className={`p-0 align-top ${LINE}`}>
                <RouteImage row={r.row} />
              </td>
            </tr>
          ))}
        </tbody>
      </table>
    </main>
  );
}

export default function App() {
  return (
    <div className={`flex h-screen flex-col overflow-hidden bg-white ${UI}`}>
      <Header />
      <Toolbar />
      <FormulaBar />
      <Grid />
    </div>
  );
}
